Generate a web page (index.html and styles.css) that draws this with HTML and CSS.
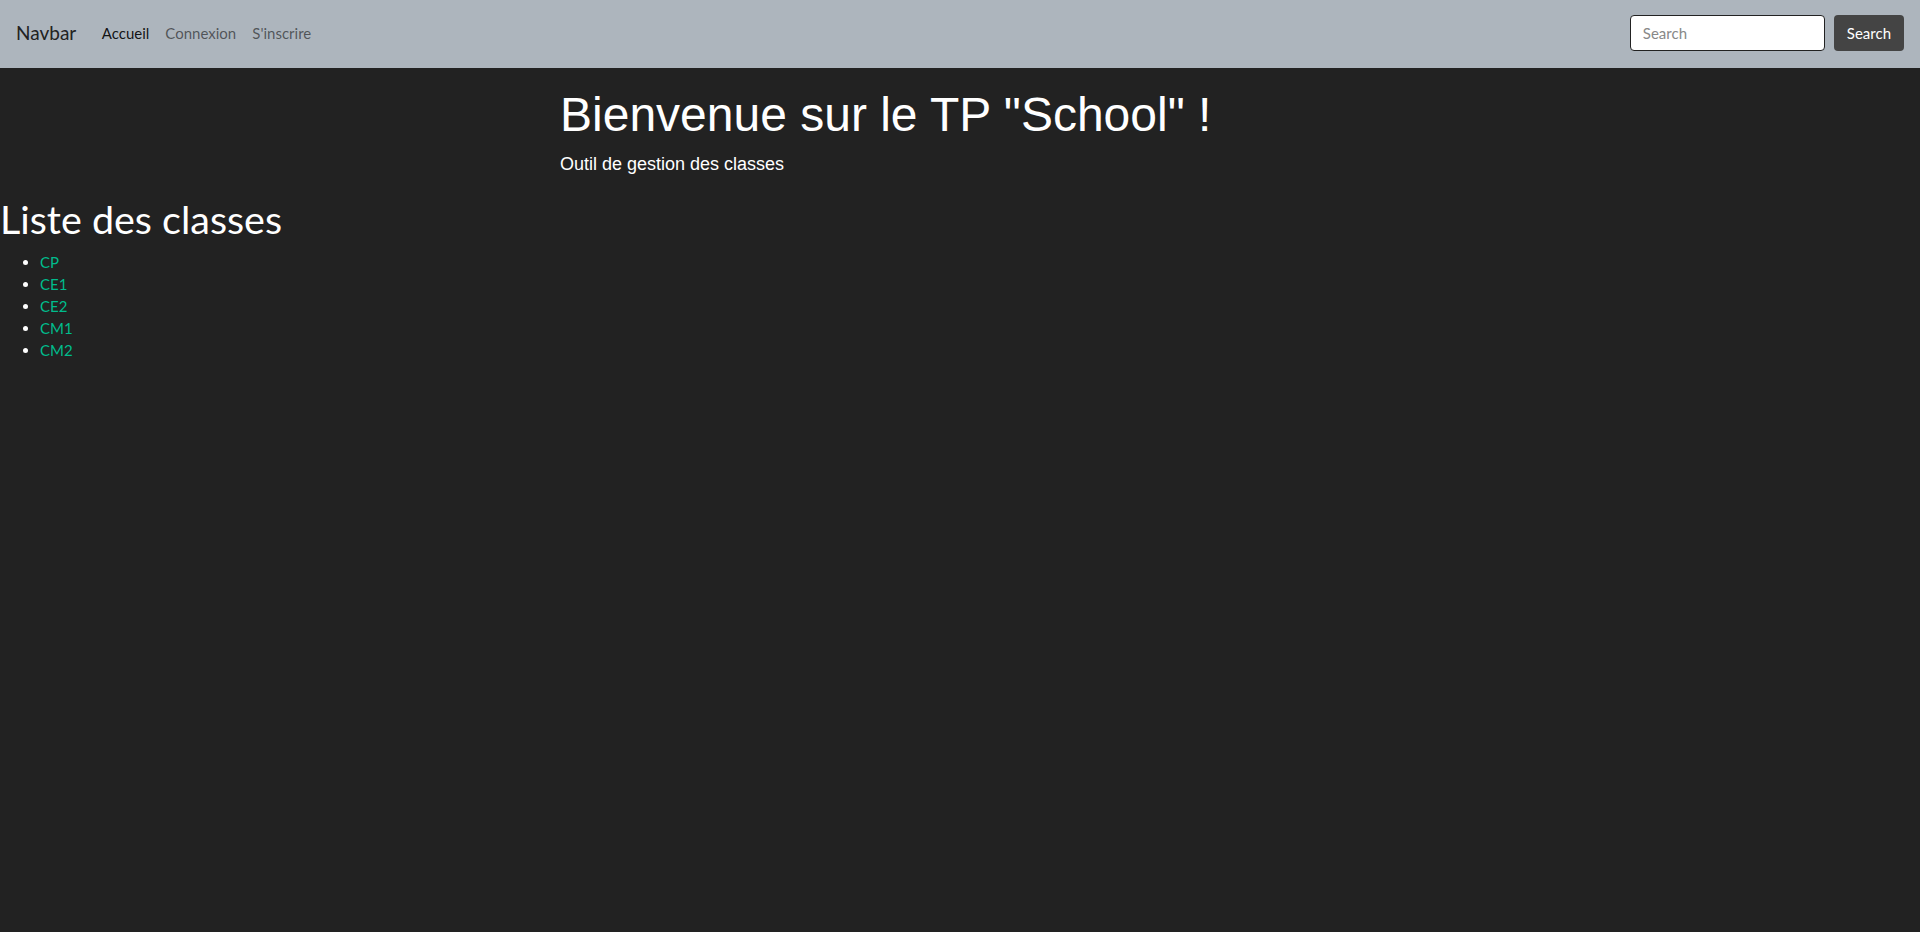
FILE: index.html
```html
<!DOCTYPE html>
<html lang="fr">
<head>
<meta charset="utf-8">
<title>TP School</title>
<link rel="stylesheet" href="styles.css">
</head>
<body>
<nav class="navbar">
  <div class="nav-left">
    <a class="brand" href="#">Navbar</a>
    <ul class="nav-links">
      <li><a class="nav-link active" href="#">Accueil</a></li>
      <li><a class="nav-link" href="#">Connexion</a></li>
      <li><a class="nav-link" href="#">S'inscrire</a></li>
    </ul>
  </div>
  <form class="search-form">
    <input class="search-input" type="search" placeholder="Search">
    <button class="search-btn" type="button">Search</button>
  </form>
</nav>
<header class="hero">
  <h1 class="hero-title">Bienvenue sur le TP "School" !</h1>
  <p class="hero-sub">Outil de gestion des classes</p>
</header>
<main class="content">
  <h1 class="list-title">Liste des classes</h1>
  <ul class="class-list">
    <li><a href="#">CP</a></li>
    <li><a href="#">CE1</a></li>
    <li><a href="#">CE2</a></li>
    <li><a href="#">CM1</a></li>
    <li><a href="#">CM2</a></li>
  </ul>
</main>
</body>
</html>
```
FILE: styles.css
```css
* { box-sizing: border-box; }
html, body { margin: 0; padding: 0; }
body {
  background: #222222;
  color: #ffffff;
  font-family: Lato, "Liberation Sans", sans-serif;
  font-size: 15px;
  line-height: 1.5;
  min-height: 932px;
}
a { text-decoration: none; }

.navbar {
  height: 68px;
  background: #adb5bd;
  display: flex;
  align-items: center;
  justify-content: space-between;
  padding: 0 16px 2px;
}
.nav-left { display: flex; align-items: center; }
.brand {
  font-size: 19px;
  color: #222222;
  margin-right: 17.5px;
  line-height: 1.5;
}
.nav-links {
  display: flex;
  list-style: none;
  margin: 0;
  padding: 0;
}
.nav-link {
  display: block;
  padding: 8px;
  color: rgba(0, 0, 0, 0.55);
  font-size: 15px;
}
.nav-link.active { color: rgba(0, 0, 0, 0.9); }

.search-form { display: flex; align-items: center; gap: 9px; }
.search-input {
  width: 195px;
  height: 36px;
  border: 1px solid #222222;
  border-radius: 4px;
  background: #ffffff;
  padding: 6px 12px;
  font-family: Lato, "Liberation Sans", sans-serif;
  font-size: 15px;
  color: #444;
}
.search-input::placeholder { color: #888888; }
.search-btn {
  height: 36px;
  padding: 6px 13px;
  border: none;
  border-radius: 4px;
  background: #444444;
  color: #ffffff;
  font-family: Lato, "Liberation Sans", sans-serif;
  font-size: 15px;
}

.hero {
  width: 800px;
  margin: 0 auto;
  padding-top: 18px;
  font-family: "Liberation Sans", Arial, sans-serif;
}
.hero-title {
  font-size: 48px;
  font-weight: 400;
  line-height: 1.2;
  margin: 0 0 7px;
}
.hero-sub {
  font-size: 18px;
  line-height: 1.5;
  margin: 0 0 17px;
}

.list-title {
  font-family: Lato, sans-serif;
  font-size: 39.5px;
  font-weight: 400;
  line-height: 1.2;
  margin: 0 0 9px;
}
.class-list {
  margin: 0;
  padding-left: 40px;
  line-height: 22px;
}
.class-list a { color: #00bc8c; }
```
